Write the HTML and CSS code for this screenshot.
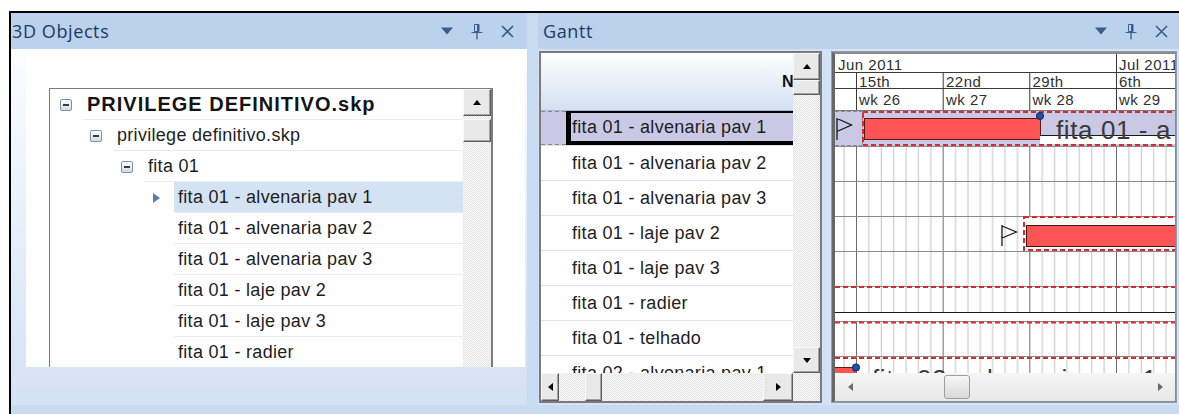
FILE: index.html
```html
<!DOCTYPE html>
<html lang="pt-BR">
<head>
<meta charset="utf-8">
<title>3D Objects · Gantt</title>
<link rel="stylesheet" href="styles.css">
</head>
<body>
<div class="dock">

  <!-- 3D Objects tool window -->
  <section class="pane pane-objects">
    <header class="pane-head">
      <span class="pane-title">3D Objects</span>
      <span class="pane-tools">
        <span class="tool"><svg width="12" height="8" viewBox="0 0 12 8"><path d="M0 0.5H12L6 7.5Z" fill="currentColor"/></svg></span>
        <span class="tool"><svg width="12" height="17" viewBox="0 0 12 17" fill="none" stroke="currentColor"><path d="M3.5 1.5h4.5v7h-4.5z"/><path d="M7 1.5v7" stroke-width="2"/><path d="M0.5 9.5h11"/><path d="M6 9.5v7" stroke-width="1.3"/></svg></span>
        <span class="tool"><svg width="13" height="13" viewBox="0 0 13 13"><path d="M1 1L12 12M12 1L1 12" stroke="currentColor" stroke-width="1.6"/></svg></span>
      </span>
    </header>
    <div class="objects-body">
      <div class="sheet">
        <div class="tree">
          <div class="tree-rows">
            <div class="node lvl0 root"><span class="slot"><span class="exp"></span></span><span class="label">PRIVILEGE DEFINITIVO.skp</span></div>
            <div class="node lvl1"><span class="slot"><span class="exp"></span></span><span class="label">privilege definitivo.skp</span></div>
            <div class="node lvl2"><span class="slot"><span class="exp"></span></span><span class="label">fita 01</span></div>
            <div class="node lvl3 sel"><span class="slot"><span class="caret"></span></span><span class="label">fita 01 - alvenaria pav 1</span></div>
            <div class="node lvl3"><span class="slot"></span><span class="label">fita 01 - alvenaria pav 2</span></div>
            <div class="node lvl3"><span class="slot"></span><span class="label">fita 01 - alvenaria pav 3</span></div>
            <div class="node lvl3"><span class="slot"></span><span class="label">fita 01 - laje pav 2</span></div>
            <div class="node lvl3"><span class="slot"></span><span class="label">fita 01 - laje pav 3</span></div>
            <div class="node lvl3"><span class="slot"></span><span class="label">fita 01 - radier</span></div>
          </div>
          <div class="vscroll">
            <span class="cbtn up"><span class="ar-up"></span></span>
            <span class="cbtn thumb"></span>
          </div>
        </div>
      </div>
    </div>
  </section>

  <!-- Gantt tool window -->
  <section class="pane pane-gantt">
    <header class="pane-head">
      <span class="pane-title">Gantt</span>
      <span class="pane-tools">
        <span class="tool"><svg width="12" height="8" viewBox="0 0 12 8"><path d="M0 0.5H12L6 7.5Z" fill="currentColor"/></svg></span>
        <span class="tool"><svg width="12" height="17" viewBox="0 0 12 17" fill="none" stroke="currentColor"><path d="M3.5 1.5h4.5v7h-4.5z"/><path d="M7 1.5v7" stroke-width="2"/><path d="M0.5 9.5h11"/><path d="M6 9.5v7" stroke-width="1.3"/></svg></span>
        <span class="tool"><svg width="13" height="13" viewBox="0 0 13 13"><path d="M1 1L12 12M12 1L1 12" stroke="currentColor" stroke-width="1.6"/></svg></span>
      </span>
    </header>
    <div class="gantt-body">

      <!-- task list -->
      <div class="grid">
        <div class="grid-main">
          <div class="grid-head">Name</div>
          <div class="g-row sel"><span class="g-ind"></span><span class="g-name">fita 01 - alvenaria pav 1</span></div>
          <div class="g-row"><span class="g-ind"></span><span class="g-name">fita 01 - alvenaria pav 2</span></div>
          <div class="g-row"><span class="g-ind"></span><span class="g-name">fita 01 - alvenaria pav 3</span></div>
          <div class="g-row"><span class="g-ind"></span><span class="g-name">fita 01 - laje pav 2</span></div>
          <div class="g-row"><span class="g-ind"></span><span class="g-name">fita 01 - laje pav 3</span></div>
          <div class="g-row"><span class="g-ind"></span><span class="g-name">fita 01 - radier</span></div>
          <div class="g-row"><span class="g-ind"></span><span class="g-name">fita 01 - telhado</span></div>
          <div class="g-row"><span class="g-ind"></span><span class="g-name">fita 02 - alvenaria pav 1</span></div>
        </div>
        <div class="vscroll">
          <span class="cbtn up"><span class="ar-up"></span></span>
          <span class="cbtn thumb"></span>
          <span class="spacer"></span>
          <span class="cbtn down"><span class="ar-down"></span></span>
        </div>
        <div class="hscroll">
          <span class="cbtn left"><span class="ar-left"></span></span>
          <span class="cbtn thumb"></span>
          <span class="spacer"></span>
          <span class="cbtn right"><span class="ar-right"></span></span>
        </div>
        <div class="corner"></div>
      </div>

      <!-- timeline -->
      <div class="chart">
        <div class="chart-frame">
          <svg class="gx" width="340" height="319" viewBox="0 0 340 319">
            <defs>
              <pattern id="days" patternUnits="userSpaceOnUse" x="21" y="57" width="86.667" height="35">
                <rect width="86.667" height="35" fill="#fff"/>
                <path d="M12.88 0V35M25.26 0V35M37.64 0V35M50.02 0V35M62.4 0V35M74.79 0V35" stroke="#c4c4c4"/>
                <path d="M0.5 0V35" stroke="#6e6e6e"/>
                <path d="M0 0.5H86.667" stroke="#8a8a8a"/>
              </pattern>
            </defs>

            <!-- timescale -->
            <rect width="340" height="57" fill="#fff"/>
            <path d="M0 18.5H340M0 34.5H340M281.5 0V57M21.5 18V57M108.2 18V57M194.8 18V57" stroke="#3a3a3a"/>
            <path d="M0 56.5H340" stroke="#7a7a7a"/>
            <g class="scale">
              <text x="3" y="16">Jun 2011</text>
              <text x="284" y="16">Jul 2011</text>
              <text x="24" y="33">15th</text>
              <text x="111" y="33">22nd</text>
              <text x="197.5" y="33">29th</text>
              <text x="284" y="33">6th</text>
              <text x="24" y="51">wk 26</text>
              <text x="111" y="51">wk 27</text>
              <text x="197.5" y="51">wk 28</text>
              <text x="284" y="51">wk 29</text>
            </g>

            <!-- day grid -->
            <rect y="57" width="340" height="262" fill="url(#days)"/>

            <!-- row 1: selected task -->
            <rect y="57" width="340" height="35" fill="#c9c9e6"/>
            <path d="M0 57.5H27M0 91.5H27M27.5 57V92" stroke="#8a8a8a" stroke-dasharray="4 2"/>
            <path d="M2 64V86M2 64.5L16.5 71L2 77.5" fill="none" stroke="#141414" stroke-width="1.3"/>
            <rect x="28" y="58" width="330" height="33" fill="none" stroke="#e3262b" stroke-width="2" stroke-dasharray="5 3"/>
            <rect x="29.5" y="64.5" width="176" height="21" fill="#ff5454" stroke="#5b1a1a"/>
            <rect x="205" y="82" width="140" height="8" fill="#fff"/>
            <path d="M205 81.5H340" stroke="#1a1a1a"/>
            <circle cx="205" cy="62" r="3.6" fill="#1f50a3" stroke="#0b2b68"/>
            <text class="tag" x="221" y="84.5">fita 01 - a</text>

            <!-- row 4 -->
            <rect x="189" y="163" width="160" height="33" fill="#fff" stroke="#e3262b" stroke-width="2" stroke-dasharray="5 3"/>
            <rect x="191.5" y="171.5" width="160" height="21" fill="#ff5454" stroke="#3a1515"/>
            <path d="M167 171V192M167 172L181.5 178L167 184" fill="none" stroke="#141414" stroke-width="1.3"/>

            <!-- row 6 -->
            <path d="M0 233H340" stroke="#e3262b" stroke-width="2" stroke-dasharray="5 3"/>
            <rect y="258" width="340" height="9" fill="#fff"/>
            <path d="M0 258.5H340" stroke="#1a1a1a"/>

            <!-- row 7 -->
            <path d="M0 268.5H340M0 304H340" stroke="#e3262b" stroke-width="2" stroke-dasharray="5 3"/>

            <!-- row 8 -->
            <rect x="-2" y="313.5" width="22" height="20" fill="#ff5454" stroke="#5b1a1a"/>
            <circle cx="21" cy="313.5" r="3.6" fill="#1f50a3" stroke="#0b2b68"/>
            <text class="tag" x="37" y="334">fita 02 - alvenaria pav 1</text>
          </svg>
          <div class="chart-scroll">
            <span class="tri-l"></span>
            <span class="knob"></span>
            <span class="spacer"></span>
            <span class="tri-r"></span>
          </div>
        </div>
      </div>

    </div>
  </section>
</div>
</body>
</html>
```

FILE: styles.css
```css
* { box-sizing: border-box; }
html, body { margin: 0; padding: 0; }

body {
  width: 1179px;
  height: 414px;
  overflow: hidden;
  background: #fff;
  font-family: "Liberation Sans", Arial, sans-serif;
  color: #1e1e1e;
}

/* docking host */
.dock {
  margin: 11px 0 0 9px;
  height: 403px;
  border-top: 2px solid #000;
  border-left: 2px solid #000;
  background: #c9dbf1;
  display: flex;
  gap: 11px;
  align-items: flex-start;
}

.pane { height: 392px; display: flex; flex-direction: column; }
.pane-objects { width: 516px; flex: none; }
.pane-gantt { flex: 1; min-width: 0; }

.pane-head {
  height: 36px;
  flex: none;
  background: #bcd1eb;
  display: flex;
  align-items: center;
  justify-content: space-between;
  padding: 0 5px 0 1px;
}
.pane-gantt .pane-head { padding: 0 3px 0 5px; }

.pane-title {
  font-family: "Open Sans", "Noto Sans", sans-serif;
  font-size: 18px;
  letter-spacing: 0.6px;
  color: #1d3b66;
}

.pane-tools { display: flex; color: #3a5d8e; }
.tool { width: 30px; height: 20px; display: flex; align-items: center; justify-content: center; }
.tool svg { display: block; }

/* ---------- 3D Objects ---------- */
.objects-body {
  flex: 1;
  padding: 1px 2px 0 15px;
  background: linear-gradient(#fbfdff, #d3e2f4);
}

.sheet {
  height: 317px;
  background: #fff;
  overflow: hidden;
  padding: 38px 0 0 23px;
}

.tree {
  width: 444px;
  height: 300px;
  display: flex;
  border: 1px solid #7c7c7c;
  border-right-width: 2px;
  border-bottom: 0;
}

.tree-rows { flex: 1; min-width: 0; }

.node { height: 31px; display: flex; align-items: stretch; }
.lvl0 { padding-left: 10px; }
.lvl1 { padding-left: 40px; }
.lvl2 { padding-left: 71px; }
.lvl3 { padding-left: 101px; }

.slot { width: 12px; flex: none; display: flex; align-items: center; }

.exp {
  width: 12px;
  height: 12px;
  border: 1px solid #7d90ab;
  border-radius: 2px;
  background: linear-gradient(#fff, #d5dbe5);
  display: flex;
  align-items: center;
  justify-content: center;
}
.exp::after { content: ""; width: 6px; height: 2px; background: #3a3a3a; }

.caret {
  margin-left: 2px;
  width: 0;
  height: 0;
  border-left: 7px solid #5a7eb4;
  border-top: 5px solid transparent;
  border-bottom: 5px solid transparent;
}

.label {
  flex: 1;
  margin-left: 11px;
  padding-left: 4px;
  border-bottom: 1px solid #ececec;
  display: flex;
  align-items: center;
  font-size: 18px;
  letter-spacing: 0.3px;
  white-space: nowrap;
}
.root .label { font-weight: bold; font-size: 20px; letter-spacing: 1px; color: #141414; }
.node.sel .label { background: #d4e3f4; }

/* classic scroll bars */
.vscroll, .hscroll, .corner {
  display: flex;
  background: repeating-conic-gradient(#ffffff 0 25%, #e0e0e0 0 50%) 0 0 / 2px 2px;
}
.vscroll { flex-direction: column; }
.tree .vscroll { width: 28px; flex: none; }

.cbtn {
  flex: none;
  background: #e9e9e9;
  border: 1px solid;
  border-color: #fafafa #5e5e5e #5e5e5e #fafafa;
  box-shadow: inset -1px -1px 0 #a3a3a3;
  display: flex;
  align-items: center;
  justify-content: center;
}
.tree .up { height: 27px; }
.tree .thumb { height: 23px; margin-top: 3px; }

.spacer { flex: 1; }

.ar-up, .ar-down, .ar-left, .ar-right { width: 0; height: 0; border: 4px solid transparent; }
.ar-up { border-top: 0; border-bottom: 5px solid #000; }
.ar-down { border-bottom: 0; border-top: 5px solid #000; }
.ar-left { border-left: 0; border-right: 5px solid #000; }
.ar-right { border-right: 0; border-left: 5px solid #000; }

/* ---------- Gantt ---------- */
.gantt-body {
  flex: 1;
  display: flex;
  gap: 9px;
  padding: 2px 2px 2px 1px;
  background: #d3e2f4;
}

.grid {
  width: 283px;
  flex: none;
  border: 2px solid #7b7b7b;
  display: grid;
  grid-template-columns: 252px 27px;
  grid-template-rows: 320px 28px;
  background: #fff;
}

.grid-main { overflow: hidden; }

.grid-head {
  height: 58px;
  border-bottom: 1px solid #a9b9cf;
  background: linear-gradient(#fdfeff, #d3e1f3);
  display: flex;
  align-items: center;
  padding-left: 241px;
  white-space: nowrap;
  font-weight: bold;
  font-size: 16px;
  color: #111;
}

.g-row { height: 35px; display: flex; border-bottom: 1px solid #e2e2e2; }
.g-ind { width: 25px; flex: none; }
.g-name {
  flex: 1;
  display: flex;
  align-items: center;
  padding-left: 6px;
  font-size: 18px;
  letter-spacing: 0.3px;
  white-space: nowrap;
}
.g-row.sel { background: #c9c9e6; }
.g-row.sel .g-ind {
  background:
    linear-gradient(90deg, #8a8a8a 60%, transparent 0) left top / 7px 1px repeat-x,
    linear-gradient(90deg, #8a8a8a 60%, transparent 0) left bottom / 7px 1px repeat-x;
}
.g-row.sel .g-name {
  border: solid #000;
  border-width: 2px 0 4px 5px;
  padding-left: 1px;
}

.grid .vscroll .up { height: 27px; }
.grid .vscroll .thumb { height: 15px; }
.grid .vscroll .down { height: 26px; }
.hscroll .left { width: 18px; }
.hscroll .thumb { width: 17px; margin-left: 26px; }
.hscroll .right { width: 30px; }

.chart { flex: 1; min-width: 0; border: 1px solid #8b9cb4; display: flex; }

.chart-frame {
  flex: 1;
  border-style: solid;
  border-color: #8a8a8a;
  border-left-color: #676767;
  border-width: 2px 1px 1px 3px;
  display: flex;
  flex-direction: column;
  background: #fff;
}
.chart-frame svg { display: block; flex: none; }

.gx text { font-family: "Liberation Sans", Arial, sans-serif; }
.gx .scale text { font-size: 15px; letter-spacing: 0.5px; fill: #2f2f2f; }
.gx .tag { font-size: 26px; letter-spacing: 0.6px; fill: #3a3a3a; }

.chart-scroll {
  height: 28px;
  flex: none;
  background: linear-gradient(#f5f5f5, #e8e8e8);
  display: flex;
  align-items: center;
  padding: 0 12px 0 13px;
}
.tri-l, .tri-r { width: 0; height: 0; border-top: 4px solid transparent; border-bottom: 4px solid transparent; }
.tri-l { border-right: 5px solid #6a6a6a; }
.tri-r { border-left: 5px solid #6a6a6a; }
.knob {
  width: 26px;
  height: 24px;
  margin-left: 91px;
  border: 1px solid #9c9c9c;
  border-radius: 3px;
  background: linear-gradient(#f7f7f7, #d9d9d9);
}
```
